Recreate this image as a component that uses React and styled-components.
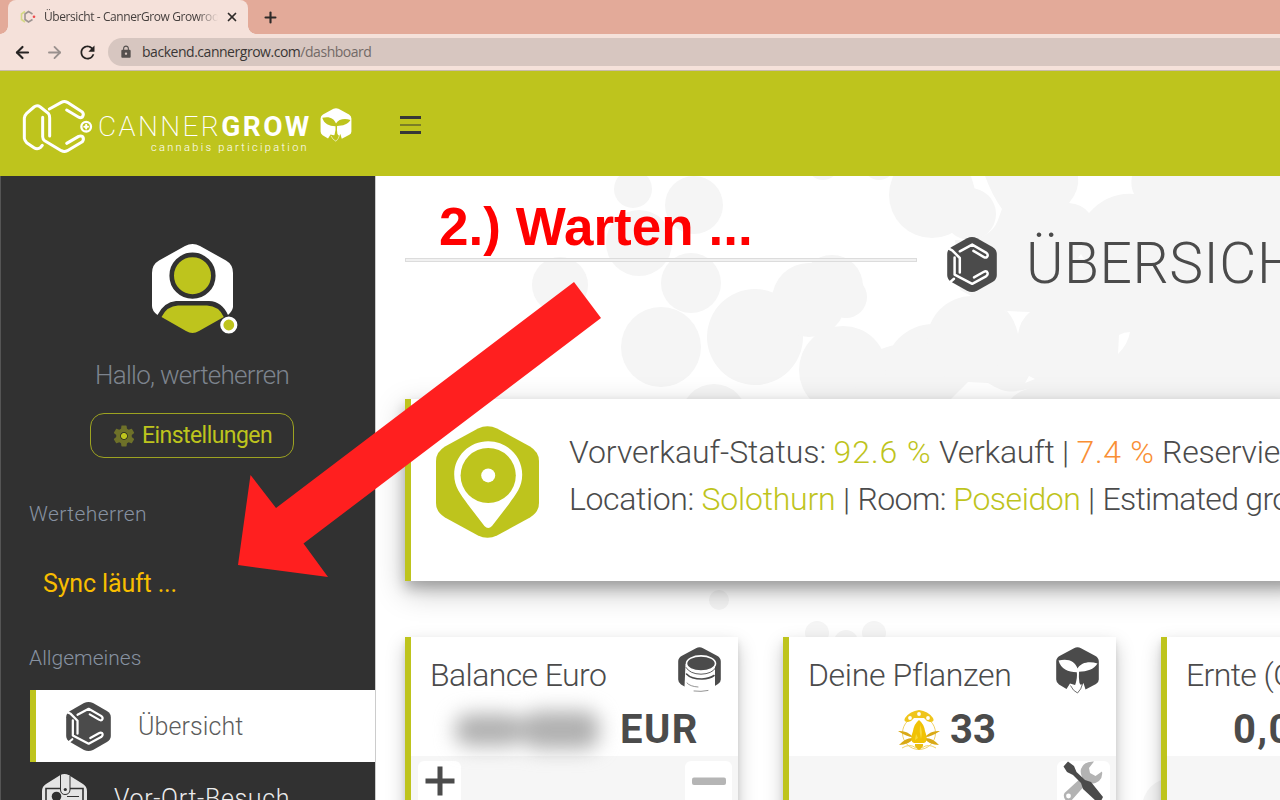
import React from 'react';
import styled, { createGlobalStyle } from 'styled-components';
import { ArrowLeft, ArrowRight, X, Plus } from 'lucide-react';
import { MdRefresh, MdLock, MdSettings } from 'react-icons/md';

const LIME = '#bec41d';
const INK = '#4b4b4b';

const Global = createGlobalStyle`
  * { box-sizing: border-box; }
  body { margin: 0; overflow: hidden; font-family: Roboto, "Open Sans", sans-serif; }
  svg { display: block; flex: none; }
`;

const Page = styled.div`
  position: relative;
  width: 1280px;
  height: 800px;
  overflow: hidden;
  display: flex;
  flex-direction: column;
`;

/* Browser chrome */
const TabStrip = styled.div`
  flex: none;
  height: 34px;
  padding-left: 8px;
  background: #e3aa99;
  display: flex;
  align-items: stretch;
`;
const Tab = styled.div`
  position: relative;
  width: 240px;
  padding: 0 9px 0 12px;
  background: #f5e1da;
  border-radius: 8px 8px 0 0;
  display: flex;
  align-items: center;
  &::before, &::after {
    content: '';
    position: absolute;
    bottom: 0;
    width: 8px;
    height: 8px;
  }
  &::before { left: -8px; background: radial-gradient(circle at 0 0, transparent 7.5px, #f5e1da 8px); }
  &::after { right: -8px; background: radial-gradient(circle at 100% 0, transparent 7.5px, #f5e1da 8px); }
`;
const TabTitle = styled.div`
  width: 176px;
  margin: 0 7px 0 8px;
  overflow: hidden;
  white-space: nowrap;
  font: 400 12px/20px "Open Sans", sans-serif;
  letter-spacing: -0.42px;
  color: #453f3d;
  mask-image: linear-gradient(90deg, #000 88%, transparent 100%);
`;
const NewTab = styled.div`
  display: flex;
  align-items: center;
  padding-left: 14px;
`;
const Toolbar = styled.div`
  flex: none;
  height: 37px;
  padding-left: 13px;
  background: #f5e1da;
  border-bottom: 1px solid #c9bba8;
  display: flex;
  align-items: center;
`;
const NavButtons = styled.div`
  display: flex;
  align-items: center;
  gap: 13px;
  width: 95px;
`;
const AddressBar = styled.div`
  flex: 1;
  height: 28px;
  padding-left: 11px;
  border-radius: 14px 0 0 14px;
  background: #d7c6c0;
  display: flex;
  align-items: center;
  gap: 9px;
`;
const Url = styled.div`
  font: 400 14px/20px "Open Sans", sans-serif;
  letter-spacing: -0.47px;
  color: #3a3635;
  white-space: nowrap;
`;
const UrlPath = styled.span`color: #736a67;`;

/* App header */
const Header = styled.header`
  flex: none;
  height: 105px;
  padding-left: 22px;
  background: ${LIME};
  display: flex;
  align-items: center;
`;
const Wordmark = styled.div`
  width: 221px;
  margin: 18px 0 0 1px;
  color: #fff;
  white-space: nowrap;
`;
const WordmarkName = styled.div`
  font-size: 28px;
  line-height: 32px;
  font-weight: 200;
  letter-spacing: 2.4px;
  display: flex;
`;
const WordmarkBold = styled.span`
  font-weight: 700;
  letter-spacing: 2.4px;
`;
const WordmarkTag = styled.div`
  padding-left: 53px;
  margin-top: -2px;
  font-size: 11px;
  line-height: 13px;
  font-weight: 300;
  letter-spacing: 2.33px;
`;
const HeaderLeaf = styled.div`padding-top: 3px;`;
const Burger = styled.div`
  width: 21px;
  margin: 2px 0 0 47px;
  display: grid;
  gap: 5px;
`;
const BurgerBar = styled.div`
  height: ${p => (p.$thin ? 2 : 3)}px;
  background: ${p => (p.$thin ? '#7b7f26' : '#373737')};
`;

/* Sidebar */
const Body = styled.div`
  flex: 1;
  min-height: 0;
  display: flex;
`;
const Sidebar = styled.aside`
  flex: none;
  width: 375px;
  background: #313131;
  border-left: 1px solid #555;
  overflow: hidden;
`;
const Profile = styled.div`
  padding: 68px 0 0 8px;
  display: flex;
  flex-direction: column;
  align-items: center;
`;
const AvatarFrame = styled.div`padding-left: 2px;`;
const Greeting = styled.div`
  margin-top: 26px;
  font-size: 26px;
  line-height: 30px;
  font-weight: 330;
  letter-spacing: -0.72px;
  color: #7d848e;
`;
const SettingsButton = styled.div`
  width: 204px;
  height: 45px;
  margin-top: 23px;
  padding-left: 20px;
  border: 1.5px solid #9da321;
  border-radius: 14px;
  display: flex;
  align-items: center;
  gap: 5px;
  font-size: 23px;
  letter-spacing: -0.56px;
  color: ${LIME};
`;
const GearIcon = styled.div`
  display: grid;
  place-items: center;
  color: #6e7129;
  background: radial-gradient(circle, ${LIME} 2.6px, #34351f 3.4px, transparent 5px);
`;
const Section = styled.div`
  margin: ${p => p.$top}px 0 0 28px;
  font-size: 21px;
  line-height: 24px;
  font-weight: 330;
  letter-spacing: ${p => p.$track}px;
  color: #8791a1;
`;
const SyncStatus = styled.div`
  margin: 43px 0 0 42px;
  font-size: 25px;
  line-height: 30px;
  letter-spacing: -0.15px;
  color: #f8bd00;
`;
const NavList = styled.nav`padding-top: 20px;`;
const NavItem = styled.div`
  height: 72px;
  margin-left: ${p => (p.$active ? 29 : 35)}px;
  padding-left: ${p => (p.$active ? 30 : 6)}px;
  border-left: ${p => (p.$active ? `6px solid ${LIME}` : '0')};
  background: ${p => (p.$active ? '#fff' : 'transparent')};
  color: ${p => (p.$active ? '#5c5c5c' : '#ececec')};
  font-size: 25px;
  font-weight: 330;
  letter-spacing: ${p => (p.$active ? 0.1 : 0.66)}px;
  display: flex;
  align-items: center;
  gap: 27px;
`;

/* Main area */
const Main = styled.main`
  position: relative;
  flex: 1;
  min-width: 0;
  padding-left: 29px;
  background: #fff;
  border-left: 1px solid #ccc;
  overflow: hidden;
`;
const Backdrop = styled.svg`
  position: absolute;
  left: -1px;
  top: 0;
`;
const TitleRow = styled.div`
  position: relative;
  height: 176px;
  display: flex;
  align-items: center;
`;
const Rule = styled.div`
  flex: none;
  width: 512px;
  height: 4px;
  margin: 0 30px 9px 0;
  background: #f1f1f1;
  border: 1px solid #dcdcdc;
`;
const PageTitle = styled.h1`
  margin: 0 0 0 29px;
  font-size: 57px;
  line-height: 60px;
  font-weight: 300;
  letter-spacing: 0.55px;
  color: ${INK};
`;
const StatusCard = styled.section`
  position: relative;
  width: 900px;
  height: 182px;
  margin-top: 47px;
  padding: 27px 0 0 25px;
  background: #fff;
  border-left: 6px solid ${LIME};
  box-shadow: 0 10px 28px rgba(0, 0, 0, 0.26), 0 7px 12px rgba(0, 0, 0, 0.22);
  display: flex;
  align-items: flex-start;
  gap: 30px;
`;
const StatusLines = styled.div`padding-top: 3px;`;
const StatusLine = styled.div`
  height: 47px;
  line-height: 47px;
  font-size: 32px;
  font-weight: 300;
  color: ${INK};
  white-space: nowrap;
  display: flex;
  gap: 7.5px;
`;
const Phrase = styled.span`
  letter-spacing: ${p => p.$track || 0}px;
  color: ${p => p.$tone || 'inherit'};
`;
const CardRow = styled.div`
  position: relative;
  width: 1090px;
  margin-top: 56px;
  display: flex;
  gap: 45px;
`;
const Card = styled.section`
  flex: none;
  width: 333px;
  height: 200px;
  background: #f6f6f6;
  border-left: 6px solid ${LIME};
  box-shadow: 0 8px 18px rgba(0, 0, 0, 0.22), 0 4px 6px rgba(0, 0, 0, 0.1);
`;
const CardHead = styled.div`
  height: 119px;
  padding: 10px 17px 0 19px;
  background: #fff;
`;
const CardTitleRow = styled.div`
  height: 44px;
  display: flex;
  justify-content: space-between;
`;
const CardTitle = styled.div`
  padding-top: 11px;
  font-size: 32px;
  line-height: 34px;
  font-weight: 300;
  letter-spacing: ${p => p.$track}px;
  color: ${INK};
  white-space: nowrap;
`;
const CardValue = styled.div`
  height: 40px;
  margin-top: 19px;
  padding-left: ${p => p.$indent}px;
  font-size: 40px;
  line-height: 40px;
  font-weight: 700;
  letter-spacing: ${p => p.$track}px;
  color: ${INK};
  display: flex;
  align-items: center;
`;
const HiddenAmount = styled.div`
  width: 171px;
  height: 44px;
  padding-left: 6px;
  display: flex;
  align-items: center;
  filter: blur(10px);
`;
const HiddenDigits = styled.div`
  width: ${p => p.$w}px;
  height: ${p => p.$h}px;
  border-radius: 14px;
  background: #b0b0b0;
`;
const CardActions = styled.div`
  display: flex;
  justify-content: space-between;
  padding: 5px 6px 0 7px;
`;
const ActionTile = styled.div`
  width: ${p => p.$w}px;
  height: 60px;
  margin-left: ${p => (p.$end ? 'auto' : 0)};
  border-radius: 6px;
  background: #fff;
  display: flex;
  justify-content: center;
`;

/* Tutorial annotations drawn over the page */
const Annotation = styled.div`
  position: absolute;
  left: 439px;
  top: 197px;
  font: 700 53px/60px "Liberation Sans", Arial, sans-serif;
  letter-spacing: 0.05px;
  color: #f00;
  white-space: nowrap;
`;
const ArrowLayer = styled.svg`
  position: absolute;
  left: 230px;
  top: 275px;
`;

const HEX = 'M20 1.2 Q25 -1.2 30 1.2 L45.5 10 Q49.8 12.5 49.8 17 V38 Q49.8 42.5 45.5 45 L30 53.8 Q25 56.2 20 53.8 L4.5 45 Q.2 42.5 .2 38 V17 Q.2 12.5 4.5 10 Z';

const MoleculeIcon = ({ w, h }) => (
  <svg width={w} height={h} viewBox="0 0 50 55" preserveAspectRatio="none">
    <path d={HEX} fill={INK} />
    <g fill="none" stroke="#fff" strokeWidth="2.5" strokeLinecap="round" strokeLinejoin="round">
      <path d="M.8 11.2 L5.2 13.3 L12.8 21 V35.5" />
      <path d="M7.6 20.5 V37.6 L25.2 46.8 L39 39.4 Q42 36.8 39.8 34.6 Q38.6 33.800 36.5 35 L27 40.4" />
      <path d="M12.8 14.3 L25.2 7.6 L39 15.6 Q42 17.8 39.8 20.2 Q38.6 21 36.5 19.8 L26.4 13.9" />
      <path d="M3 45.2 L7 41.8" />
    </g>
  </svg>
);

const LogoMark = () => (
  <svg width="75" height="67" viewBox="0 0 225 201">
    <g fill="none" stroke="#fff" strokeWidth="9" strokeLinecap="round" strokeLinejoin="round">
      <path d="M61 166 L56 172 Q46 180 36 173 L14 158 Q8 152 7 145 V84 Q8 76 14 70 L36 51 Q45 44 55 51 L79 70 Q83 75 83 83 V138" />
      <path d="M62 82 V140 Q62 148 68 152 L118 182 Q127 187 136 182 L181 155 Q187 148 182 140 Q177 136 170 139 L134 160" />
      <path d="M82 57 L118 37 Q127 32 136 37 L181 66 Q187 73 181 81 Q176 85 169 81 L134 60" />
      <path d="M73 90 V140" strokeWidth="5" stroke={LIME} />
      <circle cx="192.500" cy="110" r="14.500" strokeWidth="7" />
      <path d="M187 110 H198 M192.500 104.500 V115.500" strokeWidth="6" />
    </g>
  </svg>
);

const LeafIcon = ({ w, h, fg, bg }) => (
  <svg width={w} height={h} viewBox="0 0 43 47">
    <path d="M18 1.2 Q21.5 -.8 25 1.2 L39.5 9 Q42.8 11 42.8 14.5 V32.5 Q42.8 35.5 40 37 L29.5 42.5 L27.5 36 L25.5 39.5 L22 34 L19 38 L14 36.5 L10.5 42 L3 37.5 Q.2 35.5 .2 32.5 V14.5 Q.2 11 3.5 9 Z" fill={fg} />
    <path d="M14.500 38.500 Q17 44 21.500 46 Q25.500 42 26.300 37.500" fill={bg} stroke={fg} strokeWidth=".8" />
    <path d="M2.500 13.500 C12 11 19 14 21.500 21.500 C25 15.500 33 14 41.500 16.500 C38 22.500 31 24.500 23 24.800 Q22.500 30 23.500 37 L21.500 41 L19.500 37 Q21.500 30 20.800 25.200 C12 25 5 22 2.500 13.500 Z" fill={bg} />
  </svg>
);

const CoinsIcon = () => (
  <svg width="43" height="45" viewBox="0 0 43 45">
    <path d="M18 1.2 Q21.5 -.8 25 1.2 L39.5 9 Q42.8 11 42.8 14.5 V32.5 Q42.8 35.5 40 37 L36 39.5 H6.5 L3 37.5 Q.2 35.5 .2 32.5 V14.5 Q.2 11 3.5 9 Z" fill={INK} />
    <path d="M7.500 17 L6.500 40 Q22 48 37 40 V17 Z" fill="#fff" />
    <ellipse cx="23" cy="16.500" rx="14.500" ry="7.600" fill={INK} stroke="#fff" strokeWidth="1.600" />
    <g fill="none" stroke={INK} strokeLinecap="round">
      <path d="M8 20.500 Q12 27 23 27.200 Q34 26.800 37.500 21" strokeWidth=".9" />
      <path d="M8.500 27 Q13 32 24 32 Q32 31.500 36 28.500" strokeWidth="1.600" />
      <path d="M9 36 Q12 39.500 20 40" strokeWidth=".6" />
      <path d="M16 44 Q23 45 30 43.500" strokeWidth=".6" />
    </g>
  </svg>
);

const PinIcon = () => (
  <svg width="103" height="112" viewBox="0 0 103 112">
    <path d="M42 2.5 Q51.5 -2 61 2.5 L94 20.5 Q103 26 103 35 V77 Q103 86 94 91.5 L61 109.5 Q51.5 114 42 109.5 L9 91.5 Q0 86 0 77 V35 Q0 26 9 20.5 Z" fill={LIME} />
    <path d="M52.2 15.2 C71 15.2 86.2 30 86.2 48.5 C86.2 61 80 68 73 78 L56 100 Q52.2 104 48.4 100 L31.5 78 C24.5 68 18.2 61 18.2 48.5 C18.2 30 33.5 15.2 52.2 15.2 Z" fill="#fff" />
    <circle cx="52.2" cy="49.5" r="27.6" fill={LIME} />
    <circle cx="52.2" cy="49.4" r="7" fill="#fff" />
  </svg>
);

const Avatar = () => (
  <svg width="90" height="90" viewBox="-4 0 90 90">
    <path d="M33 2 Q40.5 -2 48 2 L74 16.5 Q81 20.5 81 29 V63 Q80.5 67 76 71 Q70 57.5 57 57 H24 Q12 58 5.5 71 Q0 67 0 62 V29 Q0 20.5 7 16.5 Z" fill="#fff" />
    <circle cx="40.5" cy="31.7" r="20.8" fill={LIME} stroke="#313131" strokeWidth="4.6" />
    <path d="M9.5 73 Q15 62 26 61.5 H55 Q67 62 71.8 73 L47 87 Q40.5 91 34 87 Z" fill={LIME} />
    <circle cx="76.8" cy="81" r="7" fill={LIME} stroke="#fff" strokeWidth="3.2" />
  </svg>
);

const VisitIcon = () => (
  <svg width="45" height="49" viewBox="0 0 45 49">
    <path d="M18 1.2 Q22.5 -1 27 1.2 L41 10 Q45 12.5 45 17 V34 Q45 38 41 40 L27 48 Q22.5 50 18 48 L4 40 Q0 38 0 34 V17 Q0 12.5 4 10 Z" fill="#e4e4e4" />
    <path d="M4 30 V14.500 H41 V30" fill="none" stroke="#313131" strokeWidth="1.600" />
    <rect x="6" y="17" width="33" height="24" rx="1" fill="#e4e4e4" />
    <path d="M18.500 1 V16 Q19 20.500 23 20.500 Q27.500 20.500 28 16 V1" fill="#e4e4e4" stroke="#313131" strokeWidth="1" />
    <circle cx="23.3" cy="15.5" r="1.6" fill="#313131" />
    <circle cx="14.500" cy="22.500" r="4.800" fill="#313131" />
    <path d="M25 22.500 H37 M25 28 H37" stroke="#313131" strokeWidth="1.2" />
  </svg>
);

const GoldIcon = () => (
  <svg width="42" height="43" viewBox="0 0 42 43">
    <circle cx="21" cy="24" r="16.500" fill="none" stroke="#f0d267" strokeWidth="1" />
    <path d="M7 9 Q12 2 21 1 Q30 2 35 9 Q37 13 32 13 Q28 12 26 9 H16 Q14 12 10 13 Q5 13 7 9 Z" fill="#efc51b" />
    <g fill="#fff"><circle cx="12" cy="9" r="1.900" /><circle cx="21" cy="5" r="1.900" /><circle cx="30" cy="9" r="1.900" /></g>
    <path d="M0 22 Q9 21 15 28 Q9 28 0 22 Z M42 22 Q33 21 27 28 Q33 28 42 22 Z M1 36 Q8 28 16 29 Q11 36 1 36 Z M41 36 Q34 28 26 29 Q31 36 41 36 Z" fill="#d9a916" />
    <path d="M21 11 Q26 15 27 22 Q31 32 26 34 H16 Q11 32 15 22 Q16 15 21 11 Z" fill="#f0c205" />
    <path d="M22 16 Q25 22 23 30 Q21 23 22 16 Z M18 25 L20 29 L17 31 Z" fill="#f8d93c" />
    <path d="M17 35 H25 Q26 38 21 41 Q16 38 17 35 Z" fill="#e9bd12" />
    <path d="M4 39 Q12 34 18 39 M38 39 Q30 34 24 39" fill="none" stroke="#f0d267" />
  </svg>
);

const ToolsIcon = () => (
  <svg width="42" height="40" viewBox="0 0 42 40">
    <path d="M31 .5 Q21 0 18 8 Q17 12 19 16 L1.500 32 Q-.5 36 3 39.500 L8 40 L24 22 Q31 24 36 20 Q40 16 39 10.500 L32.500 15 L27 12 L26 7 Z" fill="#b3b3b3" />
    <circle cx="5.500" cy="35" r="2.400" fill="#fff" />
    <path d="M5 .5 L.5 5.500 L4 11 L10 14 L18 22 L20 28 L33 40 H38 L40 36 L28 21 L22 19 L13.500 11 L11 5 Z" fill={INK} />
  </svg>
);

const Favicon = () => (
  <svg width="16" height="14" viewBox="0 0 16 14" fill="none" strokeWidth="1.600">
    <path d="M5 1.500 L1.500 4 V9.500 L5 12" stroke="#d5d985" />
    <path d="M12.500 4 L8.500 1.500 L5 4 V9.500 L8.500 12 L12.500 9.500" stroke="#9d9491" />
    <circle cx="14" cy="6.800" r="1.300" fill="#ee4b4b" />
  </svg>
);

const circles = [
  [633, 189, 19], [694, 205, 29], [639, 243, 33], [560, 285, 28], [691, 283, 30],
  [661, 347, 40], [755, 337, 48], [809, 300, 37], [832, 286, 31], [846, 297, 21],
  [803, 318, 18], [843, 370, 44], [900, 390, 45], [933, 372, 48], [972, 341, 45],
  [714, 417, 33], [823, 164, 16], [879, 164, 16], [932, 195, 43], [970, 214, 26],
  [719, 600, 10], [817, 633, 12], [874, 633, 12], [846, 642, 12], [1172, 808, 30],
];

const Bubbles = () => (
  <Backdrop width="905" height="624" viewBox="375 176 905 624">
    <g fill="#f5f5f5">
      {circles.map(([x, y, r]) => <circle key={`${x}-${y}`} cx={x} cy={y} r={r} />)}
      <path d="M985 176 H1280 V400 H1010 Q1016 392 1030 388 Q1010 395 985 388 L1000 360 L1014 340 L1006 311 L990 306 L960 290 L955 240 Q990 242 998 220 Q1000 214 1002 209 Q992 195 985 176 Z" />
    </g>
    <g fill="#fff">
      <path d="M1078 176 Q1080 190 1069 203 Q1082 204 1089 213 Q1108 192 1134 194 Q1130 186 1132 176 Z" />
      <path d="M1007 311 L1030 312 Q1020 320 1018 334 Q1015 320 1007 311 Z" />
      <path d="M1119 335 Q1124 332 1130 332 Q1128 344 1118 354 Z" />
      <path d="M1029 376 L1035 379 L1025 383 Z" />
      <path d="M1078 258 L1081 254 L1084 259 Z" />
      <path d="M950 400 Q962 388 968 382 L988 383 Q1005 394 1018 392 L1009 400 Z" />
    </g>
  </Backdrop>
);

export default function App() {
  return (
    <Page>
      <Global />
      <TabStrip>
        <Tab>
          <Favicon />
          <TabTitle>Übersicht - CannerGrow Growroo</TabTitle>
          <X size={14} strokeWidth={3} color="#2e2a29" />
        </Tab>
        <NewTab><Plus size={17} strokeWidth={3} color="#2e2a29" /></NewTab>
      </TabStrip>
      <Toolbar>
        <NavButtons>
          <ArrowLeft size={19} strokeWidth={2.7} color="#262322" />
          <ArrowRight size={19} strokeWidth={2.3} color="#99908d" />
          <MdRefresh size={21} color="#262322" />
        </NavButtons>
        <AddressBar>
          <MdLock size={14} color="#55504e" />
          <Url>backend.cannergrow.com<UrlPath>/dashboard</UrlPath></Url>
        </AddressBar>
      </Toolbar>
      <Header>
        <LogoMark />
        <Wordmark>
          <WordmarkName>CANNER<WordmarkBold>GROW</WordmarkBold></WordmarkName>
          <WordmarkTag>cannabis participation</WordmarkTag>
        </Wordmark>
        <HeaderLeaf><LeafIcon w={34} h={34} fg="#fff" bg={LIME} /></HeaderLeaf>
        <Burger><BurgerBar /><BurgerBar $thin /><BurgerBar /></Burger>
      </Header>
      <Body>
        <Sidebar>
          <Profile>
            <AvatarFrame><Avatar /></AvatarFrame>
            <Greeting>Hallo, werteherren</Greeting>
            <SettingsButton>
              <GearIcon><MdSettings size={26} /></GearIcon>
              Einstellungen
            </SettingsButton>
          </Profile>
          <Section $top={44} $track={0.42}>Werteherren</Section>
          <SyncStatus>Sync läuft ...</SyncStatus>
          <Section $top={47} $track={0}>Allgemeines</Section>
          <NavList>
            <NavItem $active><MoleculeIcon w={45} h={49} />Übersicht</NavItem>
            <NavItem><VisitIcon />Vor-Ort-Besuch</NavItem>
          </NavList>
        </Sidebar>
        <Main>
          <Bubbles />
          <TitleRow>
            <Rule />
            <MoleculeIcon w={50} h={55} />
            <PageTitle>ÜBERSICH</PageTitle>
          </TitleRow>
          <StatusCard>
            <PinIcon />
            <StatusLines>
              <StatusLine>
                <Phrase $track={-0.05}>Vorverkauf-Status:</Phrase>
                <Phrase $track={0.94} $tone={LIME}>92.6 %</Phrase>
                <Phrase $track={-0.3}>Verkauft</Phrase>
                <Phrase>|</Phrase>
                <Phrase $track={0.7} $tone="#f98f35">7.4 %</Phrase>
                <Phrase $track={-0.25}>Reservie</Phrase>
              </StatusLine>
              <StatusLine>
                <Phrase $track={-0.36}>Location:</Phrase>
                <Phrase $track={-0.21} $tone={LIME}>Solothurn</Phrase>
                <Phrase>|</Phrase>
                <Phrase $track={-0.6}>Room:</Phrase>
                <Phrase $track={-0.46} $tone={LIME}>Poseidon</Phrase>
                <Phrase>|</Phrase>
                <Phrase $track={-0.7}>Estimated gro</Phrase>
              </StatusLine>
            </StatusLines>
          </StatusCard>
          <CardRow>
            <Card>
              <CardHead>
                <CardTitleRow><CardTitle $track={-0.6}>Balance Euro</CardTitle><CoinsIcon /></CardTitleRow>
                <CardValue $indent={19} $track={1.4}>
                  <HiddenAmount><HiddenDigits $w={68} $h={32} /><HiddenDigits $w={76} $h={38} /></HiddenAmount>
                  EUR
                </CardValue>
              </CardHead>
              <CardActions>
                <ActionTile $w={43}>
                  <svg width="30" height="40"><path d="M15 5.500 V34.500 M.5 20 H29.500" stroke={INK} strokeWidth="5" /></svg>
                </ActionTile>
                <ActionTile $w={47}>
                  <svg width="34" height="40"><rect y="16.500" width="34" height="7.500" rx="2" fill="#b5b5b5" /></svg>
                </ActionTile>
              </CardActions>
            </Card>
            <Card>
              <CardHead>
                <CardTitleRow><CardTitle $track={-0.35}>Deine Pflanzen</CardTitle><LeafIcon w={43} h={47} fg={INK} bg="#fff" /></CardTitleRow>
                <CardValue $indent={90} $track={0.05}><GoldIcon />&nbsp;33</CardValue>
              </CardHead>
              <CardActions>
                <ActionTile $w={53} $end><ToolsIcon /></ActionTile>
              </CardActions>
            </Card>
            <Card>
              <CardHead>
                <CardTitleRow><CardTitle $track={-0.63}>Ernte (G</CardTitle></CardTitleRow>
                <CardValue $indent={47} $track={1.4}>0,0</CardValue>
              </CardHead>
            </Card>
          </CardRow>
        </Main>
      </Body>
      <ArrowLayer width="380" height="310" viewBox="230 275 380 310">
        <path d="M238 565 L250.500 475 L276 508 L574 282 L601 318 L303.500 543.500 L328 577 Z" fill="#ff1f1f" />
      </ArrowLayer>
      <Annotation>2.) Warten ...</Annotation>
    </Page>
  );
}
